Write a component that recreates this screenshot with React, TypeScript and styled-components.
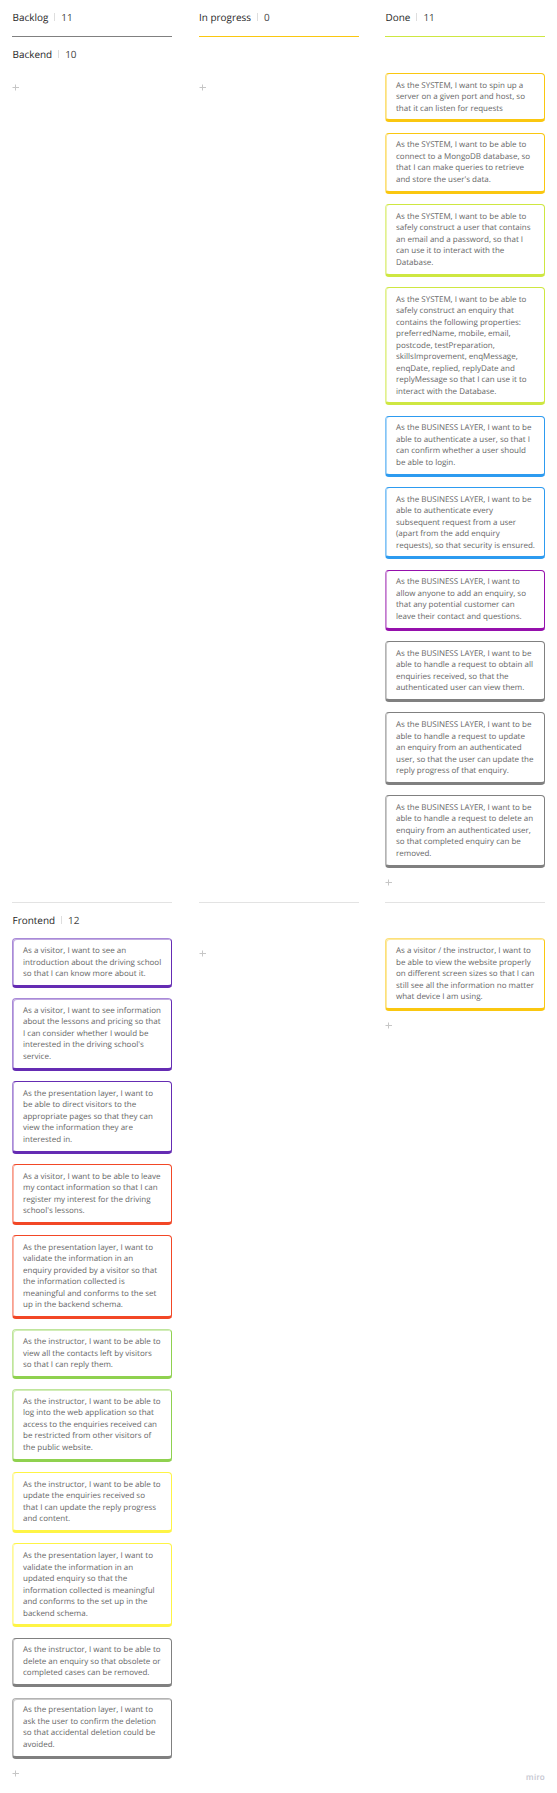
import React from "react";
import styled, { createGlobalStyle } from "styled-components";

const GlobalStyle = createGlobalStyle`
  * { box-sizing: border-box; }
  body { margin: 0; background: #fff; }
`;

const Board = styled.main`
  width: 557px;
  height: 1793px;
  padding: 0 12px;
  display: flex;
  flex-direction: column;
  overflow: hidden;
  background: #fff;
  font-family: "Open Sans", "Noto Sans", sans-serif;
  text-rendering: geometricPrecision;
`;

const Columns = styled.div<{ $height?: number }>`
  display: grid;
  grid-template-columns: repeat(3, 160px);
  justify-content: space-between;
  flex: none;
  height: ${(p) => (p.$height ? `${p.$height}px` : "auto")};
`;

const ColumnHead = styled.header<{ $color: string }>`
  height: 37px;
  padding-top: 9px;
  border-bottom: 1px solid ${(p) => p.$color};
`;

const Title = styled.div`
  display: flex;
  align-items: center;
  height: 16px;
  padding-left: 0.5px;
  font-size: 9.95px;
  line-height: 16px;
  color: #1f1f1f;
  white-space: nowrap;
`;

const Count = styled.span`
  display: flex;
  align-items: center;
  margin-left: 6px;
  color: #444;

  &::before {
    content: "";
    width: 1px;
    height: 8px;
    margin-right: 6px;
    background: #dedede;
  }
`;

const LaneTitle = styled.div<{ $height: number }>`
  flex: none;
  height: ${(p) => p.$height}px;
  padding-top: 9px;
`;

const Divider = styled.div`
  height: 1px;
  background: #e3e3e3;
`;

const Cell = styled.section`
  display: flex;
  flex-direction: column;
  align-items: flex-start;
  gap: 10.33px;
`;

const Card = styled.article<{ $color: string; $soft: string; $softTop?: boolean }>`
  width: 160px;
  padding: 5.7px 0 5.3px 10px;
  border: 1px solid ${(p) => p.$color};
  border-top-color: ${(p) => (p.$softTop ? p.$soft : p.$color)};
  border-left-color: ${(p) => p.$soft};
  border-bottom-width: 3px;
  border-radius: 4px;
  box-shadow: inset 1px ${(p) => (p.$softTop ? "1px" : "0")} 0 ${(p) => p.$color}66;
  background: #fff;
  font-size: 8px;
  line-height: 11.5px;
  color: #666;
  white-space: pre;
`;

const AddMark = styled.svg<{ $top?: boolean }>`
  display: block;
  width: 7px;
  height: 7px;
  margin-top: ${(p) => (p.$top ? "11.2px" : "1.2px")};
`;

const Footer = styled.footer`
  display: flex;
  justify-content: flex-end;
  margin-top: auto;
  height: 23px;
  font-family: Roboto, "Open Sans", sans-serif;
  font-size: 8.6px;
  font-weight: 500;
  line-height: 16px;
  letter-spacing: 0.35px;
  color: #c8c8d2;
`;

const palette = {
  amber: ["#fac710", "#fce07a"],
  lime: ["#cee741", "#e2f18f"],
  blue: ["#2d9bf0", "#83c4f6"],
  magenta: ["#9510ac", "#c27ace"],
  gray: ["#808080", "#b3b3b3"],
  violet: ["#652cb3", "#a98ad8"],
  red: ["#f24726", "#f8a08f"],
  green: ["#8fd14f", "#bfe59b"],
  yellow: ["#fef445", "#fef89a"],
};

type Story = { tone: keyof typeof palette; text: string; softTop?: boolean };

const backendDone: Story[] = [
  { tone: "amber", text: "As the SYSTEM, I want to spin up a\nserver on a given port and host, so\nthat it can listen for requests" },
  { tone: "amber", text: "As the SYSTEM, I want to be able to\nconnect to a MongoDB database, so\nthat I can make queries to retrieve\nand store the user's data." },
  { tone: "lime", text: "As the SYSTEM, I want to be able to\nsafely construct a user that contains\nan email and a password, so that I\ncan use it to interact with the\nDatabase." },
  { tone: "lime", text: "As the SYSTEM, I want to be able to\nsafely construct an enquiry that\ncontains the following properties:\npreferredName, mobile, email,\npostcode, testPreparation,\nskillsImprovement, enqMessage,\nenqDate, replied, replyDate and\nreplyMessage so that I can use it to\ninteract with the Database." },
  { tone: "blue", text: "As the BUSINESS LAYER, I want to be\nable to authenticate a user, so that I\ncan confirm whether a user should\nbe able to login." },
  { tone: "blue", text: "As the BUSINESS LAYER, I want to be\nable to authenticate every\nsubsequent request from a user\n(apart from the add enquiry\nrequests), so that security is ensured." },
  { tone: "magenta", text: "As the BUSINESS LAYER, I want to\nallow anyone to add an enquiry, so\nthat any potential customer can\nleave their contact and questions." },
  { tone: "gray", text: "As the BUSINESS LAYER, I want to be\nable to handle a request to obtain all\nenquiries received, so that the\nauthenticated user can view them." },
  { tone: "gray", text: "As the BUSINESS LAYER, I want to be\nable to handle a request to update\nan enquiry from an authenticated\nuser, so that the user can update the\nreply progress of that enquiry." },
  { tone: "gray", text: "As the BUSINESS LAYER, I want to be\nable to handle a request to delete an\nenquiry from an authenticated user,\nso that completed enquiry can be\nremoved." },
];

const frontendBacklog: Story[] = [
  { tone: "violet", softTop: true, text: "As a visitor, I want to see an\nintroduction about the driving school\nso that I can know more about it." },
  { tone: "violet", softTop: true, text: "As a visitor, I want to see information\nabout the lessons and pricing so that\nI can consider whether I would be\ninterested in the driving school's\nservice." },
  { tone: "violet", text: "As the presentation layer, I want to\nbe able to direct visitors to the\nappropriate pages so that they can\nview the information they are\ninterested in." },
  { tone: "red", text: "As a visitor, I want to be able to leave\nmy contact information so that I can\nregister my interest for the driving\nschool's lessons." },
  { tone: "red", text: "As the presentation layer, I want to\nvalidate the information in an\nenquiry provided by a visitor so that\nthe information collected is\nmeaningful and conforms to the set\nup in the backend schema." },
  { tone: "green", softTop: true, text: "As the instructor, I want to be able to\nview all the contacts left by visitors\nso that I can reply them." },
  { tone: "green", softTop: true, text: "As the instructor, I want to be able to\nlog into the web application so that\naccess to the enquiries received can\nbe restricted from other visitors of\nthe public website." },
  { tone: "yellow", text: "As the instructor, I want to be able to\nupdate the enquiries received so\nthat I can update the reply progress\nand content." },
  { tone: "yellow", text: "As the presentation layer, I want to\nvalidate the information in an\nupdated enquiry so that the\ninformation collected is meaningful\nand conforms to the set up in the\nbackend schema." },
  { tone: "gray", text: "As the instructor, I want to be able to\ndelete an enquiry so that obsolete or\ncompleted cases can be removed." },
  { tone: "gray", softTop: true, text: "As the presentation layer, I want to\nask the user to confirm the deletion\nso that accidental deletion could be\navoided." },
];

const frontendDone: Story[] = [
  { tone: "amber", softTop: true, text: "As a visitor / the instructor, I want to\nbe able to view the website properly\non different screen sizes so that I can\nstill see all the information no matter\nwhat device I am using." },
];

function Heading({ name, count }: { name: string; count: number }) {
  return (
    <Title>
      {name}
      <Count>{count}</Count>
    </Title>
  );
}

function StoryCell({ stories }: { stories: Story[] }) {
  return (
    <Cell>
      {stories.map((s) => (
        <Card key={s.text} $color={palette[s.tone][0]} $soft={palette[s.tone][1]} $softTop={s.softTop}>
          {s.text}
        </Card>
      ))}
      <AddMark $top={stories.length === 0} viewBox="0 0 7 7" stroke="#c6c6c6" strokeWidth="1">
        <path d="M3.5 0.5V6.5M0.5 3.5H7" />
      </AddMark>
    </Cell>
  );
}

export default function App() {
  return (
    <>
      <GlobalStyle />
      <Board>
        <Columns>
          <ColumnHead $color="#808080"><Heading name="Backlog" count={11} /></ColumnHead>
          <ColumnHead $color="#fac710"><Heading name="In progress" count={0} /></ColumnHead>
          <ColumnHead $color="#cee741"><Heading name="Done" count={11} /></ColumnHead>
        </Columns>
        <LaneTitle $height={35.9}><Heading name="Backend" count={10} /></LaneTitle>
        <Columns $height={829.1}>
          <StoryCell stories={[]} />
          <StoryCell stories={[]} />
          <StoryCell stories={backendDone} />
        </Columns>
        <Columns>
          <Divider />
          <Divider />
          <Divider />
        </Columns>
        <LaneTitle $height={35.45}><Heading name="Frontend" count={12} /></LaneTitle>
        <Columns $height={829}>
          <StoryCell stories={frontendBacklog} />
          <StoryCell stories={[]} />
          <StoryCell stories={frontendDone} />
        </Columns>
        <Footer>miro</Footer>
      </Board>
    </>
  );
}
